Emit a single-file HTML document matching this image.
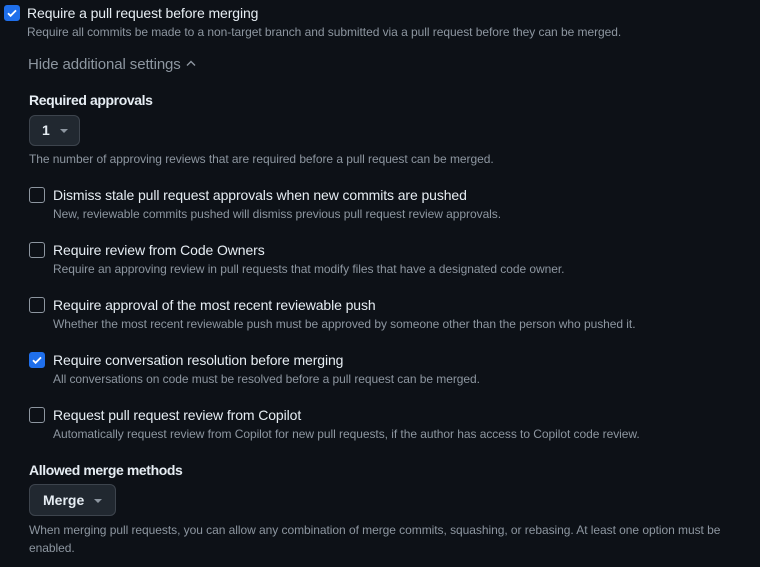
<!DOCTYPE html>
<html><head><style>
body{margin:0;background:#0d1117;width:760px;height:567px;overflow:hidden;font-family:"Liberation Sans",sans-serif;position:relative}
.a{position:absolute;white-space:nowrap}
.t{font-size:14px;color:#e6edf3;line-height:18px;letter-spacing:-0.1px}
.d{font-size:12px;color:#8d96a0;line-height:16px;letter-spacing:-0.05px}
.b{font-weight:bold;letter-spacing:-0.4px}
.cb{position:absolute;width:14px;height:14px;border:1px solid #8d96a0;border-radius:3px;box-sizing:content-box}
.cb.on{background:#1f6feb;border-color:#1f6feb}
.btn{position:absolute;background:#212830;border:1px solid #3d444d;border-radius:6px;box-sizing:border-box;color:#e6edf3;font-weight:bold;font-size:14px}
.car{display:inline-block;width:0;height:0;border-left:4px solid transparent;border-right:4px solid transparent;border-top:4px solid #8d96a0;vertical-align:middle;margin-left:10px}
</style></head><body>
<div class="cb on" style="left:4px;top:5px"><svg width="14" height="14" viewBox="0 0 14 14"><path d="M3 7.2l2.6 2.6L11 4.4" stroke="#fff" stroke-width="1.8" fill="none"/></svg></div>
<div class="a t" style="left:27px;top:4px">Require a pull request before merging</div>
<div class="a d" style="left:27px;top:24px">Require all commits be made to a non-target branch and submitted via a pull request before they can be merged.</div>
<div class="a t" style="left:28px;top:56px;color:#8d96a0;font-size:15px">Hide additional settings <svg width="12" height="12" viewBox="0 0 12 12" style="vertical-align:-1px"><path d="M2 7.5L6 3.5l4 4" stroke="#8d96a0" stroke-width="1.4" fill="none"/></svg></div>
<div class="a t b" style="left:29px;top:91px">Required approvals</div>
<div class="btn" style="left:29px;top:115px;width:51px;height:31px;padding:6px 0 0 12px">1<span class="car"></span></div>
<div class="a d" style="left:29px;top:151px">The number of approving reviews that are required before a pull request can be merged.</div>

<div class="cb" style="left:29px;top:187px"></div>
<div class="a t" style="left:53px;top:186px">Dismiss stale pull request approvals when new commits are pushed</div>
<div class="a d" style="left:53px;top:206px">New, reviewable commits pushed will dismiss previous pull request review approvals.</div>

<div class="cb" style="left:29px;top:242px"></div>
<div class="a t" style="left:53px;top:241px">Require review from Code Owners</div>
<div class="a d" style="left:53px;top:261px">Require an approving review in pull requests that modify files that have a designated code owner.</div>

<div class="cb" style="left:29px;top:297px"></div>
<div class="a t" style="left:53px;top:296px">Require approval of the most recent reviewable push</div>
<div class="a d" style="left:53px;top:316px">Whether the most recent reviewable push must be approved by someone other than the person who pushed it.</div>

<div class="cb on" style="left:29px;top:352px"><svg width="14" height="14" viewBox="0 0 14 14"><path d="M3 7.2l2.6 2.6L11 4.4" stroke="#fff" stroke-width="1.8" fill="none"/></svg></div>
<div class="a t" style="left:53px;top:351px">Require conversation resolution before merging</div>
<div class="a d" style="left:53px;top:371px">All conversations on code must be resolved before a pull request can be merged.</div>

<div class="cb" style="left:29px;top:407px"></div>
<div class="a t" style="left:53px;top:406px">Request pull request review from Copilot</div>
<div class="a d" style="left:53px;top:426px">Automatically request review from Copilot for new pull requests, if the author has access to Copilot code review.</div>

<div class="a t b" style="left:29px;top:461px">Allowed merge methods</div>
<div class="btn" style="left:29px;top:484px;width:87px;height:32px;padding:7px 0 0 13px">Merge<span class="car"></span></div>
<div class="a d" style="left:29px;top:521px;white-space:normal;width:710px;line-height:18px">When merging pull requests, you can allow any combination of merge commits, squashing, or rebasing. At least one option must be enabled.</div>
</body></html>
